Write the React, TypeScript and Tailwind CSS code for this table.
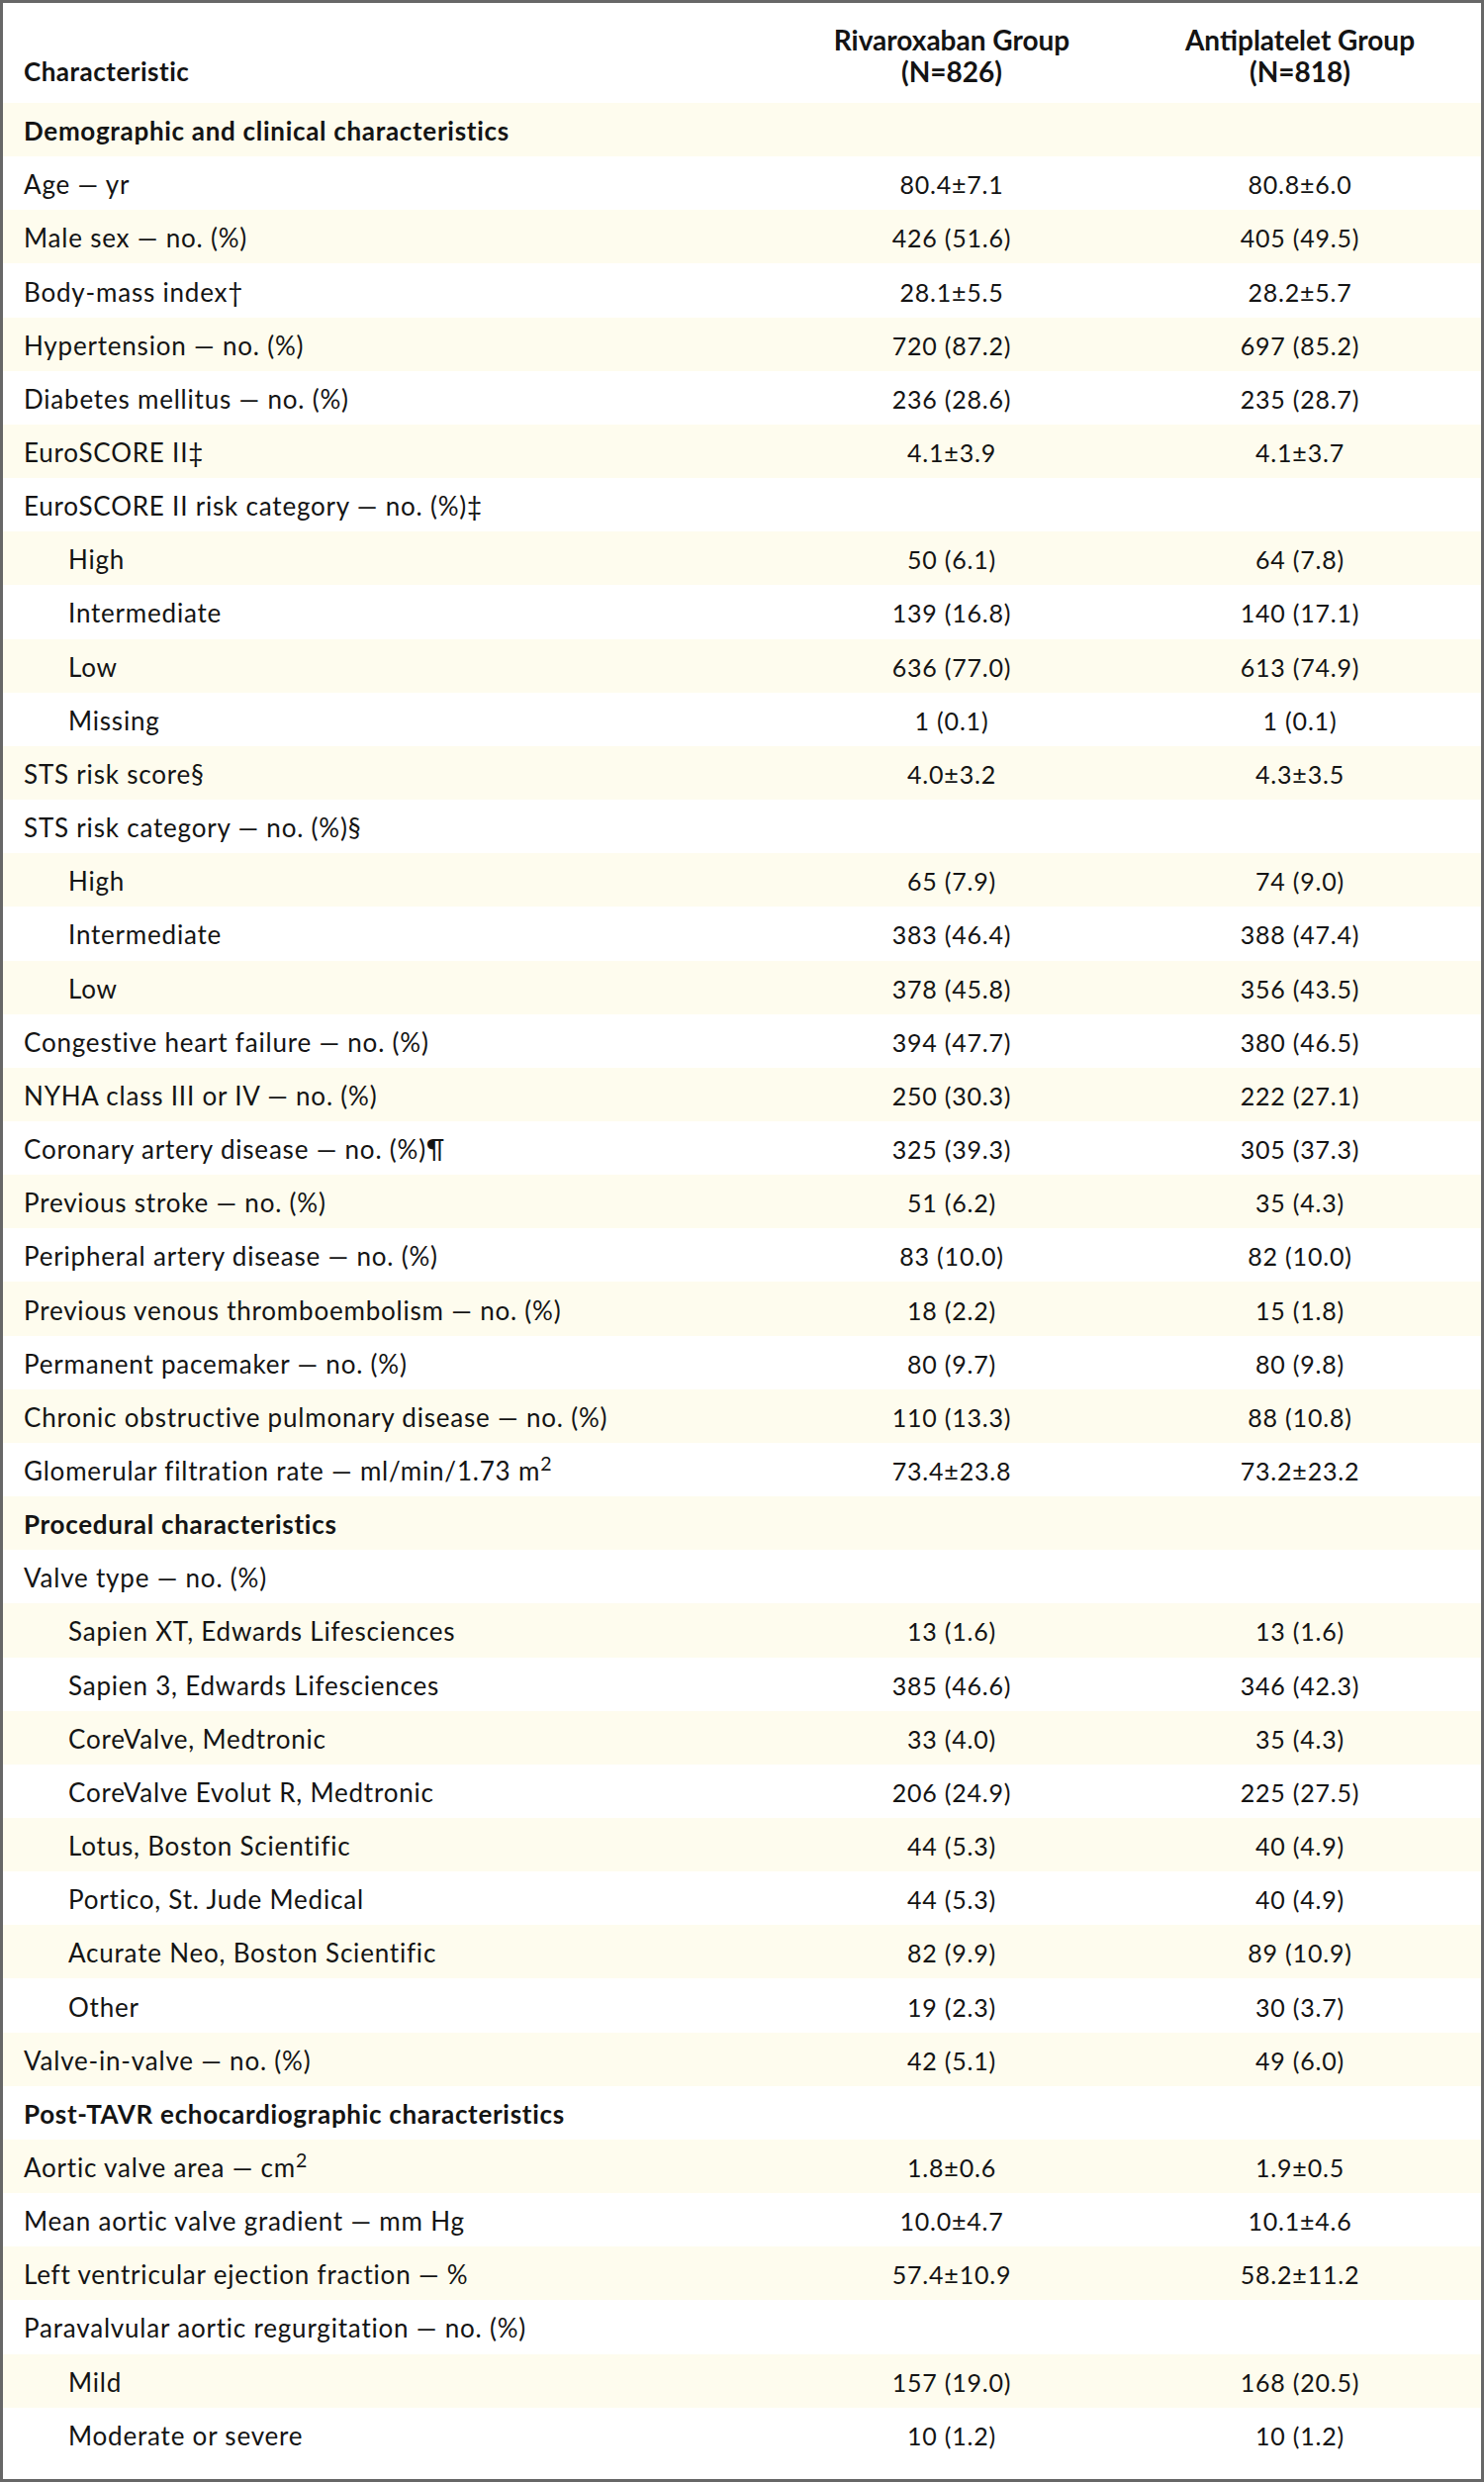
import type { ReactNode } from "react";

type Row = {
  label: ReactNode;
  a?: string;
  b?: string;
  section?: boolean;
  indent?: boolean;
};

const ROWS: Row[] = [
  { label: "Demographic and clinical characteristics", section: true },
  { label: "Age — yr", a: "80.4±7.1", b: "80.8±6.0" },
  { label: "Male sex — no. (%)", a: "426 (51.6)", b: "405 (49.5)" },
  { label: "Body-mass index†", a: "28.1±5.5", b: "28.2±5.7" },
  { label: "Hypertension — no. (%)", a: "720 (87.2)", b: "697 (85.2)" },
  { label: "Diabetes mellitus — no. (%)", a: "236 (28.6)", b: "235 (28.7)" },
  { label: "EuroSCORE II‡", a: "4.1±3.9", b: "4.1±3.7" },
  { label: "EuroSCORE II risk category — no. (%)‡" },
  { label: "High", a: "50 (6.1)", b: "64 (7.8)", indent: true },
  { label: "Intermediate", a: "139 (16.8)", b: "140 (17.1)", indent: true },
  { label: "Low", a: "636 (77.0)", b: "613 (74.9)", indent: true },
  { label: "Missing", a: "1 (0.1)", b: "1 (0.1)", indent: true },
  { label: "STS risk score§", a: "4.0±3.2", b: "4.3±3.5" },
  { label: "STS risk category — no. (%)§" },
  { label: "High", a: "65 (7.9)", b: "74 (9.0)", indent: true },
  { label: "Intermediate", a: "383 (46.4)", b: "388 (47.4)", indent: true },
  { label: "Low", a: "378 (45.8)", b: "356 (43.5)", indent: true },
  { label: "Congestive heart failure — no. (%)", a: "394 (47.7)", b: "380 (46.5)" },
  { label: "NYHA class III or IV — no. (%)", a: "250 (30.3)", b: "222 (27.1)" },
  { label: "Coronary artery disease — no. (%)¶", a: "325 (39.3)", b: "305 (37.3)" },
  { label: "Previous stroke — no. (%)", a: "51 (6.2)", b: "35 (4.3)" },
  { label: "Peripheral artery disease — no. (%)", a: "83 (10.0)", b: "82 (10.0)" },
  { label: "Previous venous thromboembolism — no. (%)", a: "18 (2.2)", b: "15 (1.8)" },
  { label: "Permanent pacemaker — no. (%)", a: "80 (9.7)", b: "80 (9.8)" },
  { label: "Chronic obstructive pulmonary disease — no. (%)", a: "110 (13.3)", b: "88 (10.8)" },
  {
    label: (
      <>
        Glomerular filtration rate — ml/min/1.73 m<sup>2</sup>
      </>
    ),
    a: "73.4±23.8",
    b: "73.2±23.2",
  },
  { label: "Procedural characteristics", section: true },
  { label: "Valve type — no. (%)" },
  { label: "Sapien XT, Edwards Lifesciences", a: "13 (1.6)", b: "13 (1.6)", indent: true },
  { label: "Sapien 3, Edwards Lifesciences", a: "385 (46.6)", b: "346 (42.3)", indent: true },
  { label: "CoreValve, Medtronic", a: "33 (4.0)", b: "35 (4.3)", indent: true },
  { label: "CoreValve Evolut R, Medtronic", a: "206 (24.9)", b: "225 (27.5)", indent: true },
  { label: "Lotus, Boston Scientific", a: "44 (5.3)", b: "40 (4.9)", indent: true },
  { label: "Portico, St. Jude Medical", a: "44 (5.3)", b: "40 (4.9)", indent: true },
  { label: "Acurate Neo, Boston Scientific", a: "82 (9.9)", b: "89 (10.9)", indent: true },
  { label: "Other", a: "19 (2.3)", b: "30 (3.7)", indent: true },
  { label: "Valve-in-valve — no. (%)", a: "42 (5.1)", b: "49 (6.0)" },
  { label: "Post-TAVR echocardiographic characteristics", section: true },
  {
    label: (
      <>
        Aortic valve area — cm<sup>2</sup>
      </>
    ),
    a: "1.8±0.6",
    b: "1.9±0.5",
  },
  { label: "Mean aortic valve gradient — mm Hg", a: "10.0±4.7", b: "10.1±4.6" },
  { label: "Left ventricular ejection fraction — %", a: "57.4±10.9", b: "58.2±11.2" },
  { label: "Paravalvular aortic regurgitation — no. (%)" },
  { label: "Mild", a: "157 (19.0)", b: "168 (20.5)", indent: true },
  { label: "Moderate or severe", a: "10 (1.2)", b: "10 (1.2)", indent: true },
];

function HeaderRow() {
  return (
    <div className="grid h-[101px] grid-cols-[783px_352px_352px] items-end pb-[16px] font-bold leading-[32px]">
      <div className="pl-[21px] text-[26px] tracking-[0.5px]">Characteristic</div>
      <div className="text-center text-[28px]">
        Rivaroxaban Group
        <br />
        (N=826)
      </div>
      <div className="text-center text-[28px]">
        Antiplatelet Group
        <br />
        (N=818)
      </div>
    </div>
  );
}

function TableRow({ row, shaded }: { row: Row; shaded: boolean }) {
  return (
    <div
      className={`grid h-[54.16px] grid-cols-[783px_352px_352px] items-center pt-[2px] leading-[32px] ${
        shaded ? "bg-[#fefcee]" : "bg-white"
      }`}
    >
      <div
        className={`${row.indent ? "pl-[66px]" : "pl-[21px]"} ${
          row.section ? "font-bold tracking-[0.7px]" : "tracking-[0.8px]"
        } whitespace-nowrap text-[26px]`}
      >
        {row.label}
      </div>
      <div className="text-center tracking-[0.8px]">{row.a}</div>
      <div className="text-center tracking-[0.8px]">{row.b}</div>
    </div>
  );
}

export default function App() {
  return (
    <div className="h-[2508px] w-[1500px] border-[3px] border-[#676767] bg-white font-['Lato',sans-serif] text-[25px] text-[#141414]">
      <HeaderRow />
      {ROWS.map((row, i) => (
        <TableRow key={i} row={row} shaded={i % 2 === 0} />
      ))}
    </div>
  );
}
